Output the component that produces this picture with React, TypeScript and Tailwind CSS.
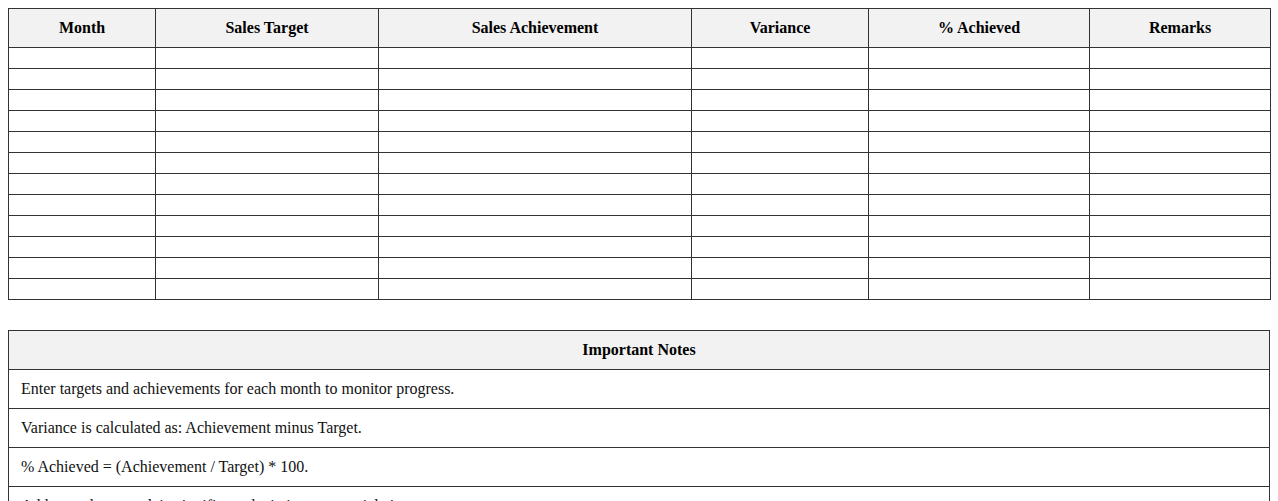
const columns = [
  { label: "Month", width: "w-[147px]" },
  { label: "Sales Target", width: "w-[223px]" },
  { label: "Sales Achievement", width: "w-[313px]" },
  { label: "Variance", width: "w-[177px]" },
  { label: "% Achieved", width: "w-[221px]" },
  { label: "Remarks", width: "w-[181px]" },
];

const notes = [
  "Enter targets and achievements for each month to monitor progress.",
  "Variance is calculated as: Achievement minus Target.",
  "% Achieved = (Achievement / Target) * 100.",
  "Add remarks to explain significant deviations or special circumstances.",
];

export default function App() {
  const rows = Array.from({ length: 12 });

  return (
    <div className="m-2 font-['Liberation_Serif',serif] text-[16px] leading-[18px] text-[#111]">
      {/* Monthly tracker */}
      <table className="w-full table-fixed border-collapse">
        <thead>
          <tr>
            {columns.map((col) => (
              <th
                key={col.label}
                className={`${col.width} border border-[#333] bg-[#f2f2f2] px-3 py-[10px] text-center font-bold text-black`}
              >
                {col.label}
              </th>
            ))}
          </tr>
        </thead>
        <tbody>
          {rows.map((_, i) => (
            <tr key={i}>
              {columns.map((col) => (
                <td key={col.label} className="border border-[#333] px-3 py-[10px]" />
              ))}
            </tr>
          ))}
        </tbody>
      </table>

      {/* Notes */}
      <table className="mt-[30px] w-full border-collapse">
        <thead>
          <tr>
            <th className="border border-[#333] bg-[#f2f2f2] px-3 py-[10px] text-center font-bold text-black">
              Important Notes
            </th>
          </tr>
        </thead>
        <tbody>
          {notes.map((note) => (
            <tr key={note}>
              <td className="border border-[#333] px-3 py-[10px] text-left">{note}</td>
            </tr>
          ))}
        </tbody>
      </table>
    </div>
  );
}
